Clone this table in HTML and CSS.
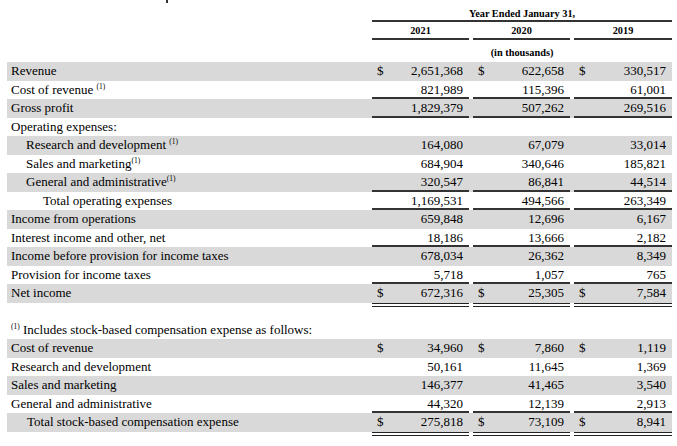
FILE: index.html
```html
<!DOCTYPE html>
<html>
<head>
<meta charset="utf-8">
<link rel="stylesheet" href="styles.css">
</head>
<body>
<div class="sheet">
  <div class="grid head-row1">
    <div class="label"><span class="title-tail"></span></div>
    <div class="span3 bold">Year Ended January 31,</div>
  </div>
  <div class="grid head-row2">
    <div class="label"></div>
    <div class="year bold">2021</div>
    <div class="year bold">2020</div>
    <div class="year bold">2019</div>
  </div>
  <div class="grid head-row3">
    <div class="label"></div>
    <div class="span3 bold nol">(in thousands)</div>
  </div>

  <div class="grid row shade">
    <div class="label">Revenue</div>
    <div class="val"><span>$</span><span>2,651,368</span></div>
    <div class="val"><span>$</span><span>622,658</span></div>
    <div class="val"><span>$</span><span>330,517</span></div>
  </div>
  <div class="grid row line">
    <div class="label">Cost of revenue <sup>(1)</sup></div>
    <div class="val"><span></span><span>821,989</span></div>
    <div class="val"><span></span><span>115,396</span></div>
    <div class="val"><span></span><span>61,001</span></div>
  </div>
  <div class="grid row shade line">
    <div class="label">Gross profit</div>
    <div class="val"><span></span><span>1,829,379</span></div>
    <div class="val"><span></span><span>507,262</span></div>
    <div class="val"><span></span><span>269,516</span></div>
  </div>
  <div class="grid row">
    <div class="label">Operating expenses:</div>
    <div class="val"></div><div class="val"></div><div class="val"></div>
  </div>
  <div class="grid row shade">
    <div class="label in1">Research and development <sup>(1)</sup></div>
    <div class="val"><span></span><span>164,080</span></div>
    <div class="val"><span></span><span>67,079</span></div>
    <div class="val"><span></span><span>33,014</span></div>
  </div>
  <div class="grid row">
    <div class="label in1">Sales and marketing<sup>(1)</sup></div>
    <div class="val"><span></span><span>684,904</span></div>
    <div class="val"><span></span><span>340,646</span></div>
    <div class="val"><span></span><span>185,821</span></div>
  </div>
  <div class="grid row shade line">
    <div class="label in1">General and administrative<sup>(1)</sup></div>
    <div class="val"><span></span><span>320,547</span></div>
    <div class="val"><span></span><span>86,841</span></div>
    <div class="val"><span></span><span>44,514</span></div>
  </div>
  <div class="grid row line">
    <div class="label in2">Total operating expenses</div>
    <div class="val"><span></span><span>1,169,531</span></div>
    <div class="val"><span></span><span>494,566</span></div>
    <div class="val"><span></span><span>263,349</span></div>
  </div>
  <div class="grid row shade">
    <div class="label">Income from operations</div>
    <div class="val"><span></span><span>659,848</span></div>
    <div class="val"><span></span><span>12,696</span></div>
    <div class="val"><span></span><span>6,167</span></div>
  </div>
  <div class="grid row line">
    <div class="label">Interest income and other, net</div>
    <div class="val"><span></span><span>18,186</span></div>
    <div class="val"><span></span><span>13,666</span></div>
    <div class="val"><span></span><span>2,182</span></div>
  </div>
  <div class="grid row shade">
    <div class="label">Income before provision for income taxes</div>
    <div class="val"><span></span><span>678,034</span></div>
    <div class="val"><span></span><span>26,362</span></div>
    <div class="val"><span></span><span>8,349</span></div>
  </div>
  <div class="grid row line">
    <div class="label">Provision for income taxes</div>
    <div class="val"><span></span><span>5,718</span></div>
    <div class="val"><span></span><span>1,057</span></div>
    <div class="val"><span></span><span>765</span></div>
  </div>
  <div class="grid row shade">
    <div class="label">Net income</div>
    <div class="val"><span>$</span><span>672,316</span></div>
    <div class="val"><span>$</span><span>25,305</span></div>
    <div class="val"><span>$</span><span>7,584</span></div>
  </div>
  <div class="grid dbl"><div></div><div class="r"></div><div class="r"></div><div class="r"></div></div>

  <div class="grid row note">
    <div class="label"><sup>(1)</sup> Includes stock-based compensation expense as follows:</div>
  </div>
  <div class="grid row shade">
    <div class="label">Cost of revenue</div>
    <div class="val"><span>$</span><span>34,960</span></div>
    <div class="val"><span>$</span><span>7,860</span></div>
    <div class="val"><span>$</span><span>1,119</span></div>
  </div>
  <div class="grid row">
    <div class="label">Research and development</div>
    <div class="val"><span></span><span>50,161</span></div>
    <div class="val"><span></span><span>11,645</span></div>
    <div class="val"><span></span><span>1,369</span></div>
  </div>
  <div class="grid row shade">
    <div class="label">Sales and marketing</div>
    <div class="val"><span></span><span>146,377</span></div>
    <div class="val"><span></span><span>41,465</span></div>
    <div class="val"><span></span><span>3,540</span></div>
  </div>
  <div class="grid row line">
    <div class="label">General and administrative</div>
    <div class="val"><span></span><span>44,320</span></div>
    <div class="val"><span></span><span>12,139</span></div>
    <div class="val"><span></span><span>2,913</span></div>
  </div>
  <div class="grid row shade">
    <div class="label in1b">Total stock-based compensation expense</div>
    <div class="val"><span>$</span><span>275,818</span></div>
    <div class="val"><span>$</span><span>73,109</span></div>
    <div class="val"><span>$</span><span>8,941</span></div>
  </div>
  <div class="grid dbl"><div></div><div class="r"></div><div class="r"></div><div class="r"></div></div>
</div>
</body>
</html>
```

FILE: styles.css
```css
html, body {
  margin: 0;
  padding: 0;
  background: #ffffff;
}
body {
  font-family: "Liberation Serif", "Times New Roman", serif;
  color: #000;
}
.sheet {
  margin-left: 7px;
  width: 665px;
}
.grid {
  display: grid;
  grid-template-columns: 361px 97px 97px 98px;
  column-gap: 4px;
}
.bold {
  font-weight: bold;
  font-size: 10.3px;
}
.head-row1 {
  height: 22px;
}
.head-row1 .span3 {
  grid-column: 2 / 5;
  text-align: center;
  border-bottom: 2px solid #333;
  line-height: 12px;
  padding-top: 8px;
}
.title-tail {
  display: block;
  width: 2px;
  height: 3px;
  margin-left: 155px;
  background: #333;
}
.head-row2 {
  height: 18px;
}
.head-row2 .year {
  text-align: center;
  border-bottom: 2px solid #333;
  line-height: 15px;
  padding-top: 1px;
}
.head-row3 {
  height: 22px;
}
.head-row3 .span3 {
  grid-column: 2 / 5;
  text-align: center;
  line-height: 14px;
  padding-top: 6px;
}
.row {
  height: 18.5px;
  font-size: 13px;
  line-height: 18px;
}
.row > div {
  box-sizing: border-box;
  height: 18.5px;
}
.shade {
  background: #d9d9d9;
}
.label {
  padding-left: 4px;
  white-space: nowrap;
}
.in1 { padding-left: 19px; }
.in1b { padding-left: 20px; }
.in2 { padding-left: 36px; }
.val {
  display: flex;
  justify-content: space-between;
  padding: 0 6px 0 5px;
}
.line .val {
  border-bottom: 2px solid #333;
}
sup {
  font-size: 7.5px;
  line-height: 0;
  vertical-align: 5px;
}
.dbl {
  height: 4px;
}
.dbl .r {
  border-top: 4px double #222;
}
.note {
  margin-top: 14px;
}
.note .label {
  grid-column: 1 / 5;
}
```
